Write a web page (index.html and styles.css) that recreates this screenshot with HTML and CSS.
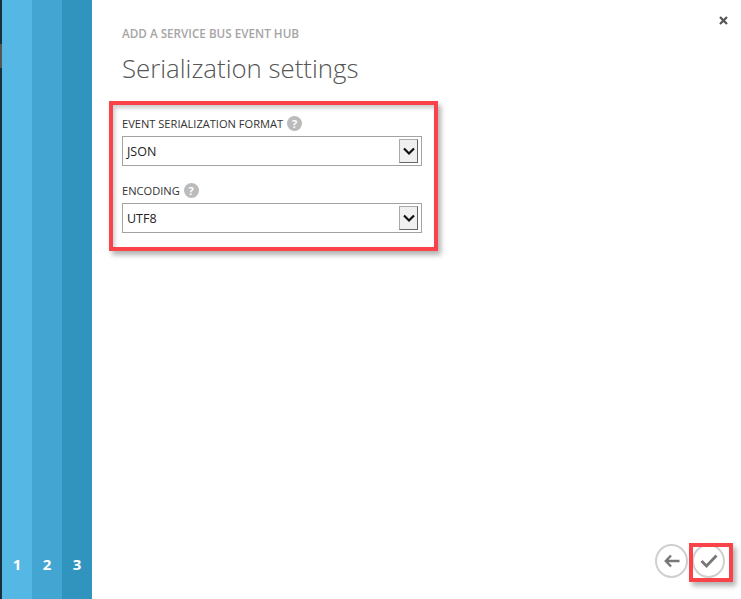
FILE: index.html
```html
<!DOCTYPE html>
<html lang="en">
<head>
<meta charset="UTF-8">
<meta name="viewport" content="width=device-width, initial-scale=1.0">
<title>Add a Service Bus Event Hub</title>
<link rel="stylesheet" href="styles.css">
</head>
<body>

<div class="wizard">
    <!-- Step strip -->
    <div class="edge"></div>
    <div class="step step-1"><span>1</span></div>
    <div class="step step-2"><span>2</span></div>
    <div class="step step-3"><span>3</span></div>

    <div class="content">
        <div class="close-row">
            <svg class="close-icon" width="9" height="9" viewBox="0 0 9 9"><path d="M1 1L8 8M8 1L1 8" stroke="#555" stroke-width="2.2" fill="none"/></svg>
        </div>
        <div class="subtitle">ADD A SERVICE BUS EVENT HUB</div>
        <h1 class="title">Serialization settings</h1>

        <div class="form-box">
            <div class="field">
                <label class="field-label">EVENT SERIALIZATION FORMAT <span class="help">?</span></label>
                <div class="select">
                    <span class="select-value">JSON</span>
                    <span class="select-btn"><svg width="12" height="9" viewBox="0 0 12 9"><path d="M1 1.5L6 6.5L11 1.5" stroke="#111" stroke-width="2.2" fill="none"/></svg></span>
                </div>
            </div>
            <div class="field">
                <label class="field-label">ENCODING <span class="help">?</span></label>
                <div class="select">
                    <span class="select-value">UTF8</span>
                    <span class="select-btn"><svg width="12" height="9" viewBox="0 0 12 9"><path d="M1 1.5L6 6.5L11 1.5" stroke="#111" stroke-width="2.2" fill="none"/></svg></span>
                </div>
            </div>
        </div>

        <div class="actions">
            <span class="round-btn">
                <svg width="16" height="14" viewBox="0 0 16 14"><path d="M7 1.5L1.8 7L7 12.5M2 7H15.5" stroke="#777" stroke-width="2.4" fill="none"/></svg>
            </span>
            <span class="round-btn next">
                <svg width="18" height="14" viewBox="0 0 18 14"><path d="M1.5 7L6.5 12L16.5 1.5" stroke="#777" stroke-width="2.8" fill="none"/></svg>
                <span class="next-mark"></span>
            </span>
        </div>
    </div>
</div>

</body>
</html>
```

FILE: styles.css
```css
/* Base Styling */
body {
    margin: 0;
    padding: 0;
    background-color: #fff;
    font-family: "Open Sans", sans-serif;
}

.wizard {
    display: flex;
    width: 741px;
    height: 599px;
    overflow: hidden;
}

/* Step strip */
.edge {
    width: 2px;
    background: linear-gradient(#16303d 0, #16303d 44px, #555 44px, #555 68px, #16303d 68px);
}

.step {
    width: 30px;
    display: flex;
    align-items: flex-end;
    justify-content: center;
    padding-bottom: 25px;
    box-sizing: border-box;
    color: #fff;
    font-size: 15px;
    font-weight: 700;
    line-height: 20px;
}

.step-1 { background-color: #55b8e4; }
.step-2 { background-color: #43a5d1; }
.step-3 { background-color: #3194bf; }

/* Main panel */
.content {
    flex: 1;
    position: relative;
    padding: 0 0 0 17px;
}

.close-row {
    display: flex;
    justify-content: flex-end;
    height: 26px;
    padding: 16px 13px 0 0;
    box-sizing: border-box;
}

.subtitle {
    margin-left: 13px;
    color: #a5a5a5;
    font-size: 11.7px;
    font-weight: 600;
    line-height: 14px;
}

.title {
    margin: 10px 0 0 13px;
    color: #555;
    font-size: 25.8px;
    font-weight: 300;
    line-height: 36px;
}

/* Red frame round the form */
.form-box {
    width: 329px;
    height: 150px;
    box-sizing: border-box;
    margin-top: 15px;
    padding: 9px 12px 0 9px;
    border: 4px solid #f84448;
    box-shadow: 3px 4px 5px rgba(0, 0, 0, 0.3), inset 2px 3px 4px rgba(0, 0, 0, 0.2);
    display: flex;
    flex-direction: column;
    gap: 15px;
}

.field-label {
    display: flex;
    align-items: center;
    gap: 4px;
    height: 18px;
    padding-bottom: 4px;
    color: #333;
    font-size: 11.1px;
    font-weight: 400;
}

.help {
    width: 15px;
    height: 15px;
    border-radius: 50%;
    background-color: #bbb;
    color: #fff;
    font-size: 11px;
    font-weight: 700;
    line-height: 15px;
    text-align: center;
}

.select {
    display: flex;
    align-items: center;
    justify-content: space-between;
    width: 300px;
    height: 30px;
    box-sizing: border-box;
    padding: 0 3px 0 4px;
    border: 1px solid #a3a3a3;
    color: #222;
    font-size: 12.5px;
}

.select-btn {
    display: flex;
    align-items: center;
    justify-content: center;
    width: 19px;
    height: 24px;
    box-sizing: border-box;
    border: 1px solid #777;
    border-color: #aaa #666 #666 #aaa;
    background-color: #f0f0f0;
}

/* Back and finish */
.actions {
    position: absolute;
    right: 16px;
    bottom: 21px;
    display: flex;
    gap: 4px;
}

.round-btn {
    position: relative;
    display: flex;
    align-items: center;
    justify-content: center;
    width: 33px;
    height: 34px;
    box-sizing: border-box;
    border: 2px solid #cfcfcf;
    border-radius: 50%;
}

.next-mark {
    position: absolute;
    left: -5px;
    top: -3px;
    width: 36px;
    height: 31px;
    border: 4px solid #f84448;
    box-shadow: 3px 4px 5px rgba(0, 0, 0, 0.3);
}
```
